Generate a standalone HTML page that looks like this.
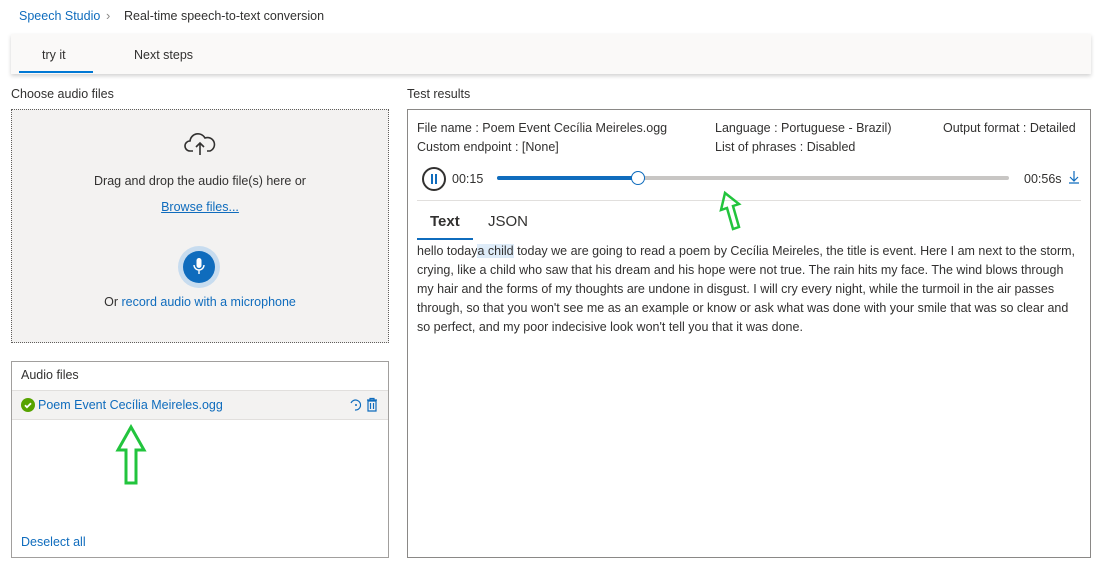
<!DOCTYPE html>
<html><head><meta charset="utf-8"><style>
*{margin:0;padding:0;box-sizing:border-box}
body{width:1100px;height:566px;background:#fff;font-family:"Liberation Sans",sans-serif;color:#323130;font-size:12.5px;position:relative;overflow:hidden}
.a{position:absolute;white-space:nowrap}
.blue{color:#0f6cbd}
</style></head><body>
<div class="a blue" style="left:19px;top:9px;font-size:12.5px">Speech Studio</div>
<div class="a" style="left:106px;top:8px;color:#8a8886;font-size:13px">&#8250;</div>
<div class="a" style="left:124px;top:9px;font-size:12.5px">Real-time speech-to-text conversion</div>
<div class="a" style="left:11px;top:34px;width:1080px;height:40px;background:#faf9f8;box-shadow:0 2px 4px rgba(0,0,0,.18)"></div>
<div class="a" style="left:42px;top:48px;font-size:12.5px">try it</div>
<div class="a" style="left:19px;top:71px;width:74px;height:2px;background:#0078d4"></div>
<div class="a" style="left:134px;top:48px;font-size:12.5px">Next steps</div>
<div class="a" style="left:11px;top:87px;font-size:12.5px">Choose audio files</div>
<div class="a" style="left:407px;top:87px;font-size:12.5px">Test results</div>
<div class="a" style="left:11px;top:109px;width:378px;height:234px;background:#f3f2f1;border:1px dotted #605e5c"></div>
<svg class="a" style="left:183px;top:131px" width="34" height="26" viewBox="0 0 34 26"><path d="M10 20H7a5 5 0 0 1 0-10a8 8 0 0 1 15-3a6 6 0 0 1 5 13h-3" fill="none" stroke="#323130" stroke-width="1.6"/><path d="M17 24V12M13 16l4-4l4 4" fill="none" stroke="#323130" stroke-width="1.6"/></svg>
<div class="a" style="left:0;width:400px;text-align:center;top:174px">Drag and drop the audio file(s) here or</div>
<div class="a blue" style="left:0;width:400px;text-align:center;top:200px;text-decoration:underline">Browse files...</div>
<div class="a" style="left:178px;top:246px;width:42px;height:42px;border-radius:50%;background:#c7dcef"></div>
<div class="a" style="left:183px;top:251px;width:32px;height:32px;border-radius:50%;background:#0f6cbd"></div>
<svg class="a" style="left:191px;top:257px" width="16" height="20" viewBox="0 0 16 20"><rect x="5.5" y="1" width="5" height="10" rx="2.5" fill="#fff"/><path d="M3 8a5 5 0 0 0 10 0M8 13v4" fill="none" stroke="#fff" stroke-width="1.4"/></svg>
<div class="a" style="left:0;width:400px;text-align:center;top:295px">Or <span class="blue">record audio with a microphone</span></div>
<div class="a" style="left:11px;top:361px;width:378px;height:197px;border:1px solid #a19f9d"></div>
<div class="a" style="left:21px;top:368px">Audio files</div>
<div class="a" style="left:12px;top:390px;width:376px;height:30px;background:#f3f2f1;border-top:1px solid #e1dfdd;border-bottom:1px solid #e1dfdd"></div>
<div class="a" style="left:21px;top:398px;width:14px;height:14px;border-radius:50%;background:#57a300"></div>
<svg class="a" style="left:21px;top:398px" width="14" height="14"><path d="M4 7.2l2 2l4-4" fill="none" stroke="#fff" stroke-width="1.8"/></svg>
<div class="a blue" style="left:38px;top:398px">Poem Event Cecília Meireles.ogg</div>
<svg class="a" style="left:348px;top:397px" width="32" height="16" viewBox="0 0 32 16"><path d="M3 6a5 5 0 1 1 4 7" fill="none" stroke="#0f6cbd" stroke-width="1.2"/><circle cx="8" cy="8" r="1" fill="#0f6cbd"/><path d="M19 3h10M22 3V1.5h4V3M20 4h8v10h-8zM22.5 6v6M25.5 6v6" fill="none" stroke="#0f6cbd" stroke-width="1.2"/></svg>
<svg class="a" style="left:115px;top:424px" width="32" height="62"><path d="M16 3L29 26H21V59H11V26H3Z" fill="none" stroke="#22c43d" stroke-width="3"/></svg>
<div class="a blue" style="left:21px;top:535px">Deselect all</div>
<div class="a" style="left:407px;top:109px;width:684px;height:449px;border:1px solid #8a8886"></div>
<div class="a" style="left:417px;top:121px">File name : Poem Event Cecília Meireles.ogg</div>
<div class="a" style="left:417px;top:140px">Custom endpoint : [None]</div>
<div class="a" style="left:715px;top:121px">Language : Portuguese - Brazil)</div>
<div class="a" style="left:715px;top:140px">List of phrases : Disabled</div>
<div class="a" style="left:943px;top:121px">Output format : Detailed</div>
<div class="a" style="left:422px;top:167px;width:24px;height:24px;border-radius:50%;border:2px solid #323130"></div>
<div class="a" style="left:431px;top:174px;width:2px;height:10px;background:#0f6cbd"></div>
<div class="a" style="left:435px;top:174px;width:2px;height:10px;background:#0f6cbd"></div>
<div class="a" style="left:452px;top:172px">00:15</div>
<div class="a" style="left:497px;top:176px;width:512px;height:4px;border-radius:2px;background:#c8c6c4"></div>
<div class="a" style="left:497px;top:176px;width:141px;height:4px;border-radius:2px;background:#0f6cbd"></div>
<div class="a" style="left:631px;top:171px;width:14px;height:14px;border-radius:50%;background:#fff;border:1.5px solid #0f6cbd"></div>
<div class="a" style="left:1024px;top:172px">00:56s</div>
<svg class="a" style="left:1068px;top:170px" width="12" height="14"><path d="M6 1v10M2 7l4 4l4-4M1 13h10" fill="none" stroke="#0f6cbd" stroke-width="1.2"/></svg>
<div class="a" style="left:417px;top:200px;width:664px;height:1px;background:#e1dfdd"></div>
<svg class="a" style="left:718px;top:190px" width="28" height="44"><path d="M7 3L3 20l6-2l6 21l6-2-6-21l6-2Z" fill="none" stroke="#22c43d" stroke-width="2.5"/></svg>
<div class="a" style="left:430px;top:213px;font-size:15px;font-weight:bold;color:#323130">Text</div>
<div class="a" style="left:488px;top:213px;font-size:15px">JSON</div>
<div class="a" style="left:417px;top:238px;width:56px;height:2px;background:#0f6cbd"></div>
<div class="a" style="left:417px;top:242px;line-height:19px">hello today<span style="background:#deecf9">a child</span> today we are going to read a poem by Cecília Meireles, the title is event. Here I am next to the storm,<br>crying, like a child who saw that his dream and his hope were not true. The rain hits my face. The wind blows through<br>my hair and the forms of my thoughts are undone in disgust. I will cry every night, while the turmoil in the air passes<br>through, so that you won't see me as an example or know or ask what was done with your smile that was so clear and<br>so perfect, and my poor indecisive look won't tell you that it was done.</div>
</body></html>
